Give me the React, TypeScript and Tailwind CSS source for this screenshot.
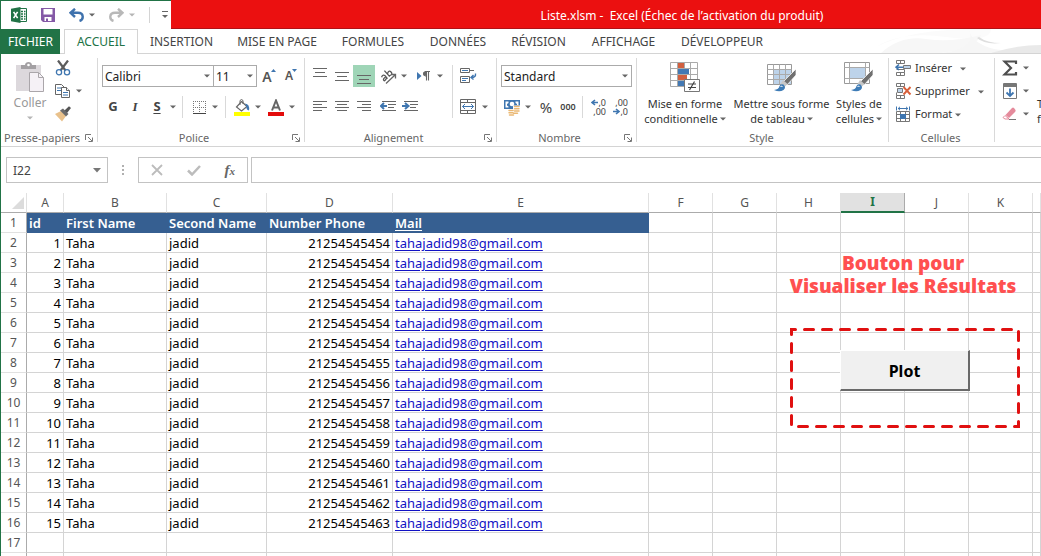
import type { ReactNode } from "react";

const UI = "font-['Noto_Sans','Open_Sans',sans-serif]";

function Caret({ light = false }: { light?: boolean }) {
  return (
    <svg width="6" height="4" viewBox="0 0 6 4" className="shrink-0" aria-hidden="true">
      <path d="M0 .5h6L3 3.5z" fill={light ? "#b5b5b5" : "#666"} />
    </svg>
  );
}

function MenuCaret({ label, light }: { label: string; light?: boolean }) {
  return (
    <button aria-label={label} className="flex h-5 w-2.5 shrink-0 items-center justify-center">
      <Caret light={light} />
    </button>
  );
}

function Tool({ label, active, children }: { label: string; active?: boolean; children: ReactNode }) {
  return (
    <button
      aria-label={label}
      className={`flex h-[22px] w-[22px] shrink-0 items-center justify-center ${active ? "bg-[#9fd5b7]" : ""}`}
    >
      {children}
    </button>
  );
}

function Separator() {
  return <div className="my-1 w-px shrink-0 bg-[#d9d9d9]" />;
}

function Launcher({ label }: { label: string }) {
  return (
    <button aria-label={label} className="flex h-4 w-3 items-center justify-center">
      <svg width="8" height="8" viewBox="0 0 8 8" fill="none" stroke="#777">
        <path d="M.5 6V.5H6M3 3l4 4M7.5 3.5v4h-4" />
      </svg>
    </button>
  );
}

function Group({ title, width, launcher, children }: { title: string; width: string; launcher?: boolean; children: ReactNode }) {
  return (
    <>
      <section aria-label={title} className={`flex shrink-0 flex-col ${width}`}>
        <div className="h-[76px]">{children}</div>
        <div className="flex h-4 items-center pr-0.5">
          <span className="flex-1 text-center text-[11px] leading-4 whitespace-nowrap text-[#666]">{title}</span>
          {launcher && <Launcher label={`Options : ${title}`} />}
        </div>
      </section>
      <Separator />
    </>
  );
}

function Dropdown({ label, value, width }: { label: string; value: string; width: string }) {
  return (
    <div className={`grid shrink-0 items-center border border-[#ababab] bg-white ${width}`}>
      <select
        aria-label={label}
        defaultValue={value}
        className="col-start-1 row-start-1 h-5 w-full appearance-none px-0.5 pt-px text-[12px] leading-5 text-[#222] outline-none"
      >
        <option>{value}</option>
      </select>
      <span className="pointer-events-none col-start-1 row-start-1 mr-[3px] justify-self-end">
        <Caret />
      </span>
    </div>
  );
}

function Lines({ rows }: { rows: [number, number, number][] }) {
  return (
    <svg width="16" height="16" viewBox="0 0 16 16" stroke="#666" aria-hidden="true">
      {rows.map(([x1, x2, y]) => (
        <path key={y} d={`M${x1} ${y}.5H${x2}`} />
      ))}
    </svg>
  );
}

function Indent({ right = false }: { right?: boolean }) {
  return (
    <svg width="16" height="16" viewBox="0 0 16 16" fill="none" stroke="#666" aria-hidden="true">
      <path d="M2 2.5h14M8 5.5h8M8 8.500h6M2 11.5h14" />
      <path
        d={right ? "M0 7h6M3 4l3.500 3L3 10" : "M1 7h6M4 4L.8 7 4 10"}
        stroke="#3f76b0"
        strokeWidth="2"
      />
    </svg>
  );
}

function ExcelLogo() {
  return (
    <svg width="16" height="16" viewBox="0 0 16 16" aria-hidden="true">
      <path d="M8.500 1.500h7v13h-7" fill="#fff" stroke="#217346" />
      <path d="M10 4.500h2M13 4.500h1.500M10 7h2M13 7h1.500M10 9.500h2M13 9.500h1.500M10 12h2M13 12h1.500" stroke="#217346" strokeWidth="1.300" />
      <path d="M0 1.700L9.500 0v16L0 14.300z" fill="#217346" />
      <path d="M2.600 4.800l4 6.400M6.600 4.800l-4 6.400" stroke="#fff" strokeWidth="1.600" />
    </svg>
  );
}

function SaveIcon() {
  return (
    <svg width="14" height="14" viewBox="0 0 14 14" aria-hidden="true">
      <path d="M0 0h14v14H2L0 12z" fill="#8459a6" />
      <path d="M2.500 1h9v5.500h-9zM3.500 9h7v4h-7z" fill="#fff" />
      <path d="M5 10.500h2V13H5z" fill="#8459a6" />
    </svg>
  );
}

function UndoIcon({ redo = false }: { redo?: boolean }) {
  return (
    <svg width="15" height="14" viewBox="0 0 15 14" fill="none" stroke={redo ? "#b8b8b8" : "#3f72ad"} strokeWidth="2.400" aria-hidden="true">
      {redo ? <path d="M9 .8l4.500 4L9 9M13 4.800H6C0 4.800 0 11.500 4.500 13" /> : <path d="M6 .8l-4.500 4L6 9M2 4.800h7c6 0 6 6.700 1.500 8.200" />}
    </svg>
  );
}

function PasteIcon() {
  return (
    <svg width="30" height="32" viewBox="0 0 30 32" aria-hidden="true">
      <path d="M1 4h25v26H1z" fill="#dcd8dc" />
      <path d="M6 8V4h4c0-4 7-4 7 0h4v4z" fill="#a3a0a3" />
      <circle cx="13.500" cy="4" r="1.300" fill="#fff" />
      <path d="M14.500 11.500h9l5 5v14h-14z" fill="#f5f1f6" stroke="#aaa6aa" />
      <path d="M23.500 11.500v5h5" fill="none" stroke="#aaa6aa" />
    </svg>
  );
}

function CutIcon() {
  return (
    <svg width="16" height="16" viewBox="0 0 16 16" fill="none" aria-hidden="true">
      <path d="M3 .5l7.500 10M13 .5L5.500 10.500" stroke="#5c5c5c" strokeWidth="2.200" />
      <circle cx="4" cy="12.300" r="2.600" stroke="#3f76b0" strokeWidth="1.300" />
      <circle cx="12" cy="12.300" r="2.600" stroke="#3f76b0" strokeWidth="1.300" />
    </svg>
  );
}

function CopyIcon() {
  return (
    <svg width="16" height="16" viewBox="0 0 16 16" fill="#fff" stroke="#666" aria-hidden="true">
      <path d="M.5 1.500h6l3 3v7h-9z" />
      <path d="M2 5h5M2 7.500h5" stroke="#3f76b0" />
      <path d="M6.500 4.500h5l3 3v7h-8z" />
      <path d="M11.500 4.500v3h3" />
      <path d="M8 9.500h5M8 12h5" stroke="#3f76b0" />
    </svg>
  );
}

function BrushIcon() {
  return (
    <svg width="16" height="16" viewBox="0 0 16 16" aria-hidden="true">
      <path d="M0 8l6-3 5 5-4 5.500z" fill="#e9c18b" />
      <path d="M5 4.500l3-2 5.500 5.500-2.500 2.500z" fill="#6b6b6b" />
      <path d="M9.500 4.500L14 .3 16 2l-4 5z" fill="#555" />
    </svg>
  );
}

function BordersIcon() {
  return (
    <svg width="15" height="15" viewBox="0 0 15 15" fill="none" stroke="#777" aria-hidden="true">
      <path d="M1 1.500h13M1 7.500h13M1.500 1v12M7.500 1v12M13.500 1v12" strokeDasharray="1 1" />
      <path d="M1 13.500h13" stroke="#444" />
    </svg>
  );
}

function FillIcon() {
  return (
    <svg width="17" height="17" viewBox="0 0 17 17" aria-hidden="true">
      <path d="M7.500 2.500l5.500 5-5.500 4.500-5-4z" fill="#fff" stroke="#666" strokeWidth="1.200" />
      <path d="M6 6V1.500q1.500-2 3 0V5" fill="none" stroke="#666" />
      <path d="M11 4.500q5 .5 4 7-3-.5-2.500-4z" fill="#3f76b0" />
      <path d="M0 13h16v4H0z" fill="#ffff00" />
    </svg>
  );
}

function FontColorIcon() {
  return (
    <svg width="16" height="17" viewBox="0 0 16 17" aria-hidden="true">
      <path d="M4 11.500L8 1.500l4 10M5.500 8.500h5" fill="none" stroke="#666" strokeWidth="2" />
      <path d="M0 13h16v4H0z" fill="#e30b0b" />
    </svg>
  );
}

function OrientationIcon() {
  return (
    <svg width="17" height="17" viewBox="0 0 17 17" fill="none" stroke="#555" aria-hidden="true">
      <g transform="rotate(-42 7 7)" strokeWidth="1.300">
        <path d="M1.500 5q3-1.500 3.500 1v4M5 7.500q-4-.5-4 1.300t4 0M8 2v8M8 6.500q4-2.500 4 1t-4 1.500" />
      </g>
      <path d="M6 15.500L15 7M11.500 6.500H15.500V10.500" stroke="#666" strokeWidth="1.300" />
    </svg>
  );
}

function ParagraphIcon() {
  return (
    <svg width="14" height="12" viewBox="0 0 14 12" aria-hidden="true">
      <path d="M0 2l4.500 4L0 10z" fill="#3f76b0" />
      <path d="M13 1.500H8.500a2.300 2.300 0 0 0 0 4.500H9M9.500 1.500v9M11.500 1.500v9" fill="none" stroke="#666" strokeWidth="1.100" />
      <circle cx="8" cy="3.700" r="2" fill="#666" />
    </svg>
  );
}

function WrapIcon() {
  return (
    <svg width="17" height="16" viewBox="0 0 17 16" fill="none" stroke="#666" aria-hidden="true">
      <path d="M.5 .5h9v4h-9zM.5 8.500h9v6h-9zM9 2.500h5" />
      <path d="M2 2.500h6M2 10.500h6M2 12.500h4" stroke="#3f76b0" />
      <path d="M15.500 5.500q.5 4-4 4M13.500 7l-2.500 2.500 2.500 2" stroke="#3f76b0" strokeWidth="1.400" />
    </svg>
  );
}

function MergeIcon() {
  return (
    <svg width="16" height="16" viewBox="0 0 16 16" fill="none" stroke="#666" aria-hidden="true">
      <path d="M.5 .5h15v14H.5zM.5 3.500h15M.5 11.500h15M7.500 .5v3M7.500 11.500v3" />
      <path d="M2.500 7.500h11M5 5L2.500 7.500 5 10M11 5l2.500 2.500L11 10" stroke="#3f76b0" />
    </svg>
  );
}

function MoneyIcon() {
  return (
    <svg width="18" height="17" viewBox="0 0 18 17" aria-hidden="true">
      <path d="M1 1h16v9H1z" fill="#3f76b0" />
      <path d="M2.500 2.500h3v1.500l-1.500 1v1.500l1.500 1v1h-3zM15.500 6V2.500h-3V4l1.500 1v1z" fill="#fff" />
      <circle cx="9" cy="5" r="2.300" fill="#fff" />
      <path d="M10 6.500h8v9H4v-5h6z" fill="#fff" />
      <path d="M11.500 7.500h4.500M11.500 9.800h4.500M11.500 12h4.500M6 11.500h4M6 13.700h4M10.500 14.200h4M6.500 16h4" stroke="#eab873" strokeWidth="1.500" strokeLinecap="round" />
    </svg>
  );
}

function DecimalIcon({ less = false }: { less?: boolean }) {
  const arrow = (
    <svg width="7" height="7" viewBox="0 0 7 7" className="shrink-0" aria-hidden="true">
      <path d={less ? "M0 3.500h6M3 1l3 2.500L3 6" : "M1 3.500h6M4 1L1 3.500 4 6"} fill="none" stroke="#3f76b0" strokeWidth="1.600" />
    </svg>
  );
  return (
    <span className="flex w-4 flex-col items-end text-[9px] leading-[9px]">
      <span className="flex items-center">{!less && arrow}{less ? ",00" : ",0"}</span>
      <span className="flex items-center">{less && arrow}{less ? ",0" : ",00"}</span>
    </span>
  );
}

function ConditionalIcon() {
  return (
    <svg width="30" height="30" viewBox="0 0 30 30" aria-hidden="true">
      <path d="M.5 .5h27v24H.5zM.5 6.500h27M.5 12.500h27M.5 18.500h27M7.500 .5v24M14.500 .5v24M20.500 .5v24" fill="#fff" stroke="#aaa" />
      <path d="M8 1h6v5H8zM8 13h9v5H8z" fill="#d2603f" />
      <path d="M8 7h11v5H8zM8 19h6v5H8z" fill="#4379b4" />
      <path d="M14.500 17.500h15v12h-15z" fill="#fff" stroke="#777" />
      <path d="M18 22h8M18 25.500h8M24.500 19.500l-5 8.500" stroke="#444" strokeWidth="1.200" />
    </svg>
  );
}

function StyleBrushIcon({ cell = false }: { cell?: boolean }) {
  return (
    <svg width="30" height="30" viewBox="0 0 30 30" aria-hidden="true">
      {cell ? (
        <>
          <path d="M.5 .5h25v21H.5z" fill="#fff" stroke="#999" />
          <path d="M6 6h15v10H6z" fill="#bdd3ea" />
          <path d="M.5 5.500h25M.5 16.500h25M5.500 .5v21M21.500 .5v21" stroke="#aaa" />
        </>
      ) : (
        <>
          <path d="M.5 2.500h24v20H.5z" fill="#fff" stroke="#999" />
          <path d="M7 8h17v14H7z" fill="#bdd3ea" />
          <path d="M.5 7.500h24M.5 12.500h24M.5 17.500h24M6.500 2.500v20M12.500 2.500v20M18.500 2.500v20" stroke="#aaa" />
        </>
      )}
      <path d="M29 7v6l-9 10-4-3z" fill="#707070" stroke="#fff" strokeWidth=".7" />
      <path d="M16 18l4.500 4-3 3-4-3z" fill="#c8c8c8" />
      <path d="M7 28q5-.5 5.500-4 1-2.500 4-1.500 3 3 0 5.500-4 2.500-9.500 0z" fill="#3e7cb7" />
      <path d="M13.500 24.500q1.500-1 2 .5" stroke="#fff" fill="none" />
    </svg>
  );
}

function InsertIcon() {
  return (
    <svg width="17" height="17" viewBox="0 0 17 17" fill="none" stroke="#777" aria-hidden="true">
      <path d="M1.500 .5h8v3h-8zM5.500 .5v3M1.500 12.500h8v3h-8zM5.500 12.500v3M1.500 9.500h8v3" />
      <path d="M8.500 5.500h7v3h-7z" fill="#bdd3ea" />
      <path d="M1 7.200h7M4 4.500L1 7.200l3 2.800" stroke="#3f76b0" strokeWidth="1.600" />
    </svg>
  );
}

function DeleteIcon() {
  return (
    <svg width="17" height="17" viewBox="0 0 17 17" fill="none" stroke="#777" aria-hidden="true">
      <path d="M1.500 .5h8v3h-8zM5.500 .5v3M1.500 12.500h8v3h-8zM5.500 12.500v3M1.500 9.500v3" />
      <path d="M2.500 5.500h5v4h-5z" fill="#bdd3ea" />
      <path d="M8.500 4l7 7.500M15.500 4l-7 7.500" stroke="#d9603b" strokeWidth="1.900" />
    </svg>
  );
}

function FormatIcon() {
  return (
    <svg width="17" height="17" viewBox="0 0 17 17" fill="none" stroke="#777" aria-hidden="true">
      <path d="M1.500 5.500h13v10h-13zM1.500 8.500h13M1.500 12.500h13M5.500 5.500v10M10.500 5.500v10" />
      <path d="M5 8h6v5H5z" fill="#3f76b0" stroke="none" />
      <path d="M1.500 .5v4M14.500 .5v4M3 2.500h10M5 .8L3.200 2.500 5 4.200M11 .8l1.800 1.700L11 4.200" stroke="#3f76b0" />
    </svg>
  );
}

function SigmaIcon() {
  return (
    <svg width="16" height="16" viewBox="0 0 16 16" aria-hidden="true">
      <path d="M14 4V1.500H2.500L9 8l-6.500 6.500H14V12" fill="none" stroke="#4e4e4e" strokeWidth="2.200" />
    </svg>
  );
}

function FillDownIcon() {
  return (
    <svg width="14" height="16" viewBox="0 0 14 16" aria-hidden="true">
      <path d="M.5 .5h13v15H.5z" fill="#fff" stroke="#777" />
      <path d="M1 1h12v3H1z" fill="#777" />
      <path d="M7 5.500v7.500M3.500 9.500L7 13l3.500-3.500" fill="none" stroke="#3f76b0" strokeWidth="1.800" />
    </svg>
  );
}

function EraserIcon() {
  return (
    <svg width="16" height="14" viewBox="0 0 16 14" aria-hidden="true">
      <path d="M3.500 8L10 1q1-1 2 0l1.500 2q.5 1-.5 2L7 11z" fill="#e58b9c" />
      <path d="M3 8.500L7 12H3L1 10.500z" fill="#fff" stroke="#e58b9c" />
      <path d="M7 12.500h7" stroke="#777" />
    </svg>
  );
}

const tabs = [
  { name: "INSERTION", width: "w-[87px]" },
  { name: "MISE EN PAGE", width: "w-[104px]" },
  { name: "FORMULES", width: "w-[88px]" },
  { name: "DONNÉES", width: "w-[82px]" },
  { name: "RÉVISION", width: "w-[79px]" },
  { name: "AFFICHAGE", width: "w-[91px]" },
  { name: "DÉVELOPPEUR", width: "w-[106px]" },
];

function TitleBar() {
  return (
    <header className="flex h-[29px] bg-white">
      <div className="flex w-[170px] shrink-0 items-center border-t border-[#217346] pl-[10px]">
        <ExcelLogo />
        <button aria-label="Enregistrer" className="ml-3.5"><SaveIcon /></button>
        <button aria-label="Annuler" className="ml-3.5"><UndoIcon /></button>
        <div className="ml-[3px] flex"><MenuCaret label="Historique des annulations" /></div>
        <button aria-label="Rétablir" disabled className="ml-3"><UndoIcon redo /></button>
        <div className="ml-[3px] flex"><MenuCaret label="Historique des rétablissements" light /></div>
        <div className="ml-3 h-4 w-px bg-[#d4d4d4]" />
        <button aria-label="Personnaliser la barre d'outils" className="ml-3">
          <svg width="6" height="8" viewBox="0 0 6 8"><path d="M0 .5h6" stroke="#666" /><path d="M0 4h6L3 7z" fill="#666" /></svg>
        </button>
      </div>
      <div className="flex min-w-0 flex-1 items-center justify-center border-b border-[#b01217] bg-[#eb1010] pt-1 pl-[152px]">
        <h1 className="text-[12px] leading-4 whitespace-pre text-white">Liste.xlsm -  Excel (Échec de l’activation du produit)</h1>
      </div>
    </header>
  );
}

function RibbonTabs() {
  return (
    <nav aria-label="Onglets du ruban" className="flex h-[25px] text-[12px] leading-[26px] whitespace-nowrap text-[#444]">
      <button className="w-[59px] shrink-0 bg-[#217346] text-white">FICHIER</button>
      <div className="w-1 shrink-0 border-b border-[#d4d4d4]" />
      <button className="w-[74px] shrink-0 border-x border-t border-[#d4d4d4] bg-white leading-6 text-[#217346]">ACCUEIL</button>
      {tabs.map((t) => (
        <button key={t.name} className={`shrink-0 border-b border-[#d4d4d4] ${t.width}`}>{t.name}</button>
      ))}
      <div className="flex min-w-0 flex-1 justify-end overflow-hidden border-b border-[#d4d4d4]">
        <svg width="190" height="24" viewBox="0 0 190 24" className="shrink-0" aria-hidden="true">
          <path d="M25 18Q50 2 95 8t45-8h-15Q60 0 25 18z" fill="#fbfbfb" />
          <path d="M30 24Q50 6 75 10t55-4q-5 14-40 18z" fill="#f7f7f7" />
          <path d="M118 0q2 14 25 20 20 4 47-4v8H90q36-4 28-24z" fill="#f6f6f6" />
          <path d="M126 9q8 7 24 5-14 0-22-6z" fill="#dedede" />
          <path d="M140 24q25-8 50-8v8z" fill="#e9e9e9" />
        </svg>
      </div>
    </nav>
  );
}

function BigButton({ icon, first, second, width }: { icon: ReactNode; first: string; second: string; width: string }) {
  return (
    <button className={`flex shrink-0 flex-col items-center pt-2 text-[11px] leading-[15px] whitespace-nowrap text-[#333] ${width}`}>
      {icon}
      <span className="mt-1">{first}</span>
      <span className="flex items-center gap-0.5">{second}<Caret /></span>
    </button>
  );
}

function SmallButton({ icon, text, gap }: { icon: ReactNode; text: string; gap: string }) {
  return (
    <button className={`flex h-[23px] items-center text-[11px] whitespace-nowrap text-[#333] ${gap}`}>
      <span className="flex items-center gap-[3px]">{icon}{text}</span>
      <Caret />
    </button>
  );
}

function Ribbon() {
  return (
    <div className="flex h-[93px] overflow-hidden border-b border-[#d4d4d4] bg-white">
      <Group title="Presse-papiers" width="w-[96px]" launcher>
        <div className="flex h-full">
          <button className="flex w-[50px] shrink-0 flex-col items-center pt-[7px] pl-2 text-[12px] leading-[15px] text-[#999]">
            <PasteIcon />
            <span className="mt-0.5">Coller</span>
            <span className="flex h-4 items-center"><Caret light /></span>
          </button>
          <div className="flex flex-col gap-px pt-[3px] pl-px">
            <Tool label="Couper"><CutIcon /></Tool>
            <div className="flex items-center"><Tool label="Copier"><CopyIcon /></Tool><MenuCaret label="Options de copie" /></div>
            <Tool label="Reproduire la mise en forme"><BrushIcon /></Tool>
          </div>
        </div>
      </Group>

      <Group title="Police" width="w-[206px]" launcher>
        <div className="flex flex-col gap-[9px] pt-[11px] pl-1">
          <div className="flex h-[22px]">
            <Dropdown label="Police" value="Calibri" width="w-[112px]" />
            <Dropdown label="Taille de police" value="11" width="-ml-px w-[44px]" />
            <div className="flex pl-px font-semibold text-[#555]">
              <Tool label="Augmenter la taille"><span className="text-[14px]">A</span><span className="mb-3 -ml-px"><svg width="5" height="3" viewBox="0 0 5 3"><path d="M0 3h5L2.500 0z" fill="#3f76b0" /></svg></span></Tool>
              <Tool label="Réduire la taille"><span className="text-[12px]">A</span><span className="mb-3 -ml-px"><svg width="5" height="3" viewBox="0 0 5 3"><path d="M0 0h5L2.500 3z" fill="#3f76b0" /></svg></span></Tool>
            </div>
          </div>
          <div className="flex h-[22px] items-center text-[13px] font-bold text-[#444]">
            <Tool label="Gras">G</Tool>
            <Tool label="Italique"><span className="font-['Liberation_Serif',serif] italic">I</span></Tool>
            <Tool label="Souligné"><span className="underline underline-offset-2">S</span></Tool>
            <MenuCaret label="Styles de soulignement" />
            <div className="mr-[5px] ml-1 h-[22px] w-px bg-[#d9d9d9]" />
            <Tool label="Bordures"><BordersIcon /></Tool>
            <MenuCaret label="Types de bordure" />
            <div className="mx-[5px] h-[22px] w-px bg-[#d9d9d9]" />
            <Tool label="Couleur de remplissage"><FillIcon /></Tool>
            <MenuCaret label="Couleurs de remplissage" />
            <div className="flex items-center pl-0.5"><Tool label="Couleur de police"><FontColorIcon /></Tool><MenuCaret label="Couleurs de police" /></div>
          </div>
        </div>
      </Group>

      <Group title="Alignement" width="w-[191px]" launcher>
        <div className="flex pt-[11px] pl-1">
          <div className="flex w-[143px] flex-col gap-[9px]">
            <div className="flex h-[22px] items-center">
              <Tool label="Aligner en haut"><Lines rows={[[1, 15, 0], [3, 13, 4], [1, 15, 8]]} /></Tool>
              <Tool label="Aligner au centre"><Lines rows={[[1, 15, 4], [3, 13, 8], [1, 15, 12]]} /></Tool>
              <Tool label="Aligner en bas" active><Lines rows={[[1, 15, 7], [3, 13, 11], [1, 15, 15]]} /></Tool>
              <div className="flex items-center pl-0.5"><Tool label="Orientation"><OrientationIcon /></Tool><MenuCaret label="Options d'orientation" /></div>
              <div className="flex items-center pl-1"><Tool label="Sens du texte"><ParagraphIcon /></Tool><MenuCaret label="Options de sens du texte" /></div>
            </div>
            <div className="flex h-[22px] items-center">
              <Tool label="Aligner à gauche"><Lines rows={[[1, 15, 2], [1, 10, 5], [1, 15, 8], [1, 10, 11]]} /></Tool>
              <Tool label="Centrer"><Lines rows={[[1, 15, 2], [3, 13, 5], [1, 15, 8], [3, 13, 11]]} /></Tool>
              <Tool label="Aligner à droite"><Lines rows={[[1, 15, 2], [6, 15, 5], [1, 15, 8], [6, 15, 11]]} /></Tool>
              <div className="flex pl-0.5"><Tool label="Diminuer le retrait"><Indent /></Tool><Tool label="Augmenter le retrait"><Indent right /></Tool></div>
            </div>
          </div>
          <div className="w-px bg-[#d9d9d9]" />
          <div className="flex flex-col gap-[9px] pl-1">
            <Tool label="Renvoyer à la ligne"><WrapIcon /></Tool>
            <div className="flex items-center gap-px"><Tool label="Fusionner et centrer"><MergeIcon /></Tool><MenuCaret label="Options de fusion" /></div>
          </div>
        </div>
      </Group>

      <Group title="Nombre" width="w-[139px]" launcher>
        <div className="flex flex-col gap-[9px] pt-[11px] pl-1">
          <Dropdown label="Format de nombre" value="Standard" width="w-[131px]" />
          <div className="flex h-[22px] items-center text-[#444]">
            <Tool label="Format comptable"><MoneyIcon /></Tool>
            <MenuCaret label="Formats comptables" />
            <div className="flex pl-0.5">
              <Tool label="Pourcentage"><span className="text-[15px]">%</span></Tool>
              <Tool label="Séparateur de milliers"><span className="text-[9px] font-semibold">000</span></Tool>
            </div>
            <div className="mr-1 ml-[3px] h-[22px] w-px bg-[#d9d9d9]" />
            <Tool label="Ajouter une décimale"><DecimalIcon /></Tool>
            <Tool label="Réduire les décimales"><DecimalIcon less /></Tool>
          </div>
        </div>
      </Group>

      <Group title="Style" width="w-[251px]">
        <div className="flex h-full">
          <BigButton icon={<ConditionalIcon />} first="Mise en forme" second="conditionnelle" width="w-[96px]" />
          <BigButton icon={<StyleBrushIcon />} first="Mettre sous forme" second="de tableau" width="w-[97px]" />
          <BigButton icon={<StyleBrushIcon cell />} first="Styles de" second="cellules" width="w-[58px]" />
        </div>
      </Group>

      <Group title="Cellules" width="w-[105px]">
        <div className="flex flex-col pt-[3px] pl-1.5">
          <SmallButton icon={<InsertIcon />} text="Insérer" gap="gap-2" />
          <SmallButton icon={<DeleteIcon />} text="Supprimer" gap="gap-2" />
          <SmallButton icon={<FormatIcon />} text="Format" gap="gap-[3px]" />
        </div>
      </Group>

      <section aria-label="Édition" className="flex shrink-0">
        <div className="flex flex-col gap-px pt-[3px] pl-1">
          <div className="flex items-center"><Tool label="Somme"><SigmaIcon /></Tool><MenuCaret label="Fonctions" /></div>
          <div className="flex items-center"><Tool label="Remplissage"><FillDownIcon /></Tool><MenuCaret label="Options de remplissage" /></div>
          <div className="flex items-center"><Tool label="Effacer"><EraserIcon /></Tool><MenuCaret label="Options d'effacement" /></div>
        </div>
        <button className="flex flex-col items-start pt-[42px] pl-1.5 text-[11px] leading-[15px] whitespace-nowrap text-[#333]">
          <span>Trier et</span>
          <span>filtrer</span>
        </button>
      </section>
    </div>
  );
}

function FormulaBar() {
  return (
    <div className="flex h-[46px] items-start bg-white pt-[10px] pl-[5px] text-[#444]">
      <div className="grid h-[26px] w-[102px] shrink-0 items-center border border-[#c3c3c3]">
        <input aria-label="Zone de nom" defaultValue="I22" className="col-start-1 row-start-1 h-6 w-full pl-1.5 text-[12px] outline-none" />
        <button aria-label="Noms définis" className="col-start-1 row-start-1 mr-1.5 justify-self-end">
          <svg width="8" height="5" viewBox="0 0 8 5"><path d="M0 0h8L4 4.500z" fill="#777" /></svg>
        </button>
      </div>
      <div className="flex h-[26px] w-[30px] shrink-0 flex-col items-center justify-center gap-0.5">
        <span className="h-0.5 w-0.5 bg-[#b0b0b0]" />
        <span className="h-0.5 w-0.5 bg-[#b0b0b0]" />
        <span className="h-0.5 w-0.5 bg-[#b0b0b0]" />
      </div>
      <div className="flex h-[26px] w-[110px] shrink-0 items-center justify-around border border-[#c3c3c3]">
        <button aria-label="Annuler la saisie"><svg width="12" height="12" viewBox="0 0 12 12"><path d="M1 1l10 10M11 1L1 11" stroke="#bcbcbc" strokeWidth="1.800" /></svg></button>
        <button aria-label="Valider la saisie"><svg width="14" height="11" viewBox="0 0 14 11"><path d="M1 5.500L5 9.500 13 1" fill="none" stroke="#bcbcbc" strokeWidth="2.500" /></svg></button>
        <button aria-label="Insérer une fonction" className="font-['Liberation_Serif',serif] text-[15px] leading-5 font-bold text-[#666] italic">f<span className="text-[11px]">x</span></button>
      </div>
      <input aria-label="Barre de formule" className="ml-[3px] h-[26px] min-w-0 flex-1 border border-r-0 border-[#c3c3c3] px-2 text-[12px] outline-none" />
    </div>
  );
}

const letters = ["A", "B", "C", "D", "E", "F", "G", "H", "I", "J", "K", ""];
const phones = [
  "21254545454", "21254545454", "21254545454", "21254545454", "21254545454", "21254545454", "21254545455", "21254545456",
  "21254545457", "21254545458", "21254545459", "21254545460", "21254545461", "21254545462", "21254545463",
];
const cell = "border-r border-b border-[#d4d4d4] p-0 pt-px";
const headCell = "bg-[#365f91] p-0 pl-[2px] text-left font-semibold text-white";
const rowHead = "border-r border-b border-r-[#ababab] border-b-[#e1e1e1] p-0 pt-px text-center text-[12px] font-normal text-[#555]";

function EmptyCells({ row, count }: { row: number; count: number }) {
  return <>{Array.from({ length: count }, (_, i) => <td key={`${row}-${i}`} className={cell} />)}</>;
}

function Sheet() {
  return (
    <main className="relative min-h-0 flex-1 overflow-hidden bg-white">
      <table className="w-full table-fixed border-separate border-spacing-0 text-[13px] leading-[18px] whitespace-nowrap text-black">
        <colgroup>
          <col className="w-[26px]" />
          <col className="w-[37px]" />
          <col className="w-[103px]" />
          <col className="w-[100px]" />
          <col className="w-[126px]" />
          <col className="w-[256px]" />
          <col className="w-[64px]" />
          <col className="w-[64px]" />
          <col className="w-[64px]" />
          <col className="w-[64px]" />
          <col className="w-[64px]" />
          <col className="w-[64px]" />
          <col />
        </colgroup>
        <thead>
          <tr className="h-5 text-[12px] text-[#555]">
            <td className="border-r border-b border-r-[#e1e1e1] border-b-[#ababab] p-0">
              <svg width="12" height="12" viewBox="0 0 12 12" className="mr-0.5 ml-auto" aria-hidden="true"><path d="M12 0v12H0z" fill="#dcdcdc" /></svg>
            </td>
            {letters.map((l) => (
              <th
                key={l}
                scope="col"
                className={l === "I" ? "border-r border-b-2 border-r-[#ababab] border-b-[#217346] bg-[#e1e1e1] p-0 font-bold text-[#217346]" : "border-r border-b border-r-[#e1e1e1] border-b-[#ababab] p-0 font-normal"}
              >
                {l}
              </th>
            ))}
          </tr>
        </thead>
        <tbody>
          <tr className="h-5">
            <th scope="row" className={rowHead}>1</th>
            <th className={headCell}>id</th>
            <th className={headCell}>First Name</th>
            <th className={headCell}>Second Name</th>
            <th className={headCell}>Number Phone</th>
            <th className={headCell}><span className="underline underline-offset-2">Mail</span></th>
            <EmptyCells row={1} count={7} />
          </tr>
          {phones.map((phone, i) => (
            <tr key={i} className="h-5">
              <th scope="row" className={rowHead}>{i + 2}</th>
              <td className={`${cell} pr-[2px] text-right`}>{i + 1}</td>
              <td className={`${cell} pl-[2px]`}>Taha</td>
              <td className={`${cell} pl-[2px]`}>jadid</td>
              <td className={`${cell} pr-[2px] text-right`}>{phone}</td>
              <td className={`${cell} pl-[2px]`}><a href="mailto:tahajadid98@gmail.com" className="text-[#1111c4] underline underline-offset-2">tahajadid98@gmail.com</a></td>
              <EmptyCells row={i + 2} count={7} />
            </tr>
          ))}
          {[17, 18].map((n) => (
            <tr key={n} className="h-5">
              <th scope="row" className={rowHead}>{n}</th>
              <EmptyCells row={n} count={12} />
            </tr>
          ))}
        </tbody>
      </table>

      <p className="absolute top-[59px] left-[762px] w-[280px] text-center font-['Open_Sans',sans-serif] text-[19px] leading-[23px] font-extrabold text-[#ff5050]">
        Bouton pour<br />Visualiser les Résultats
      </p>
      <svg className="absolute top-[134px] left-[788px]" width="232" height="104" viewBox="0 0 232 104" aria-hidden="true">
        <rect x="2.500" y="2.500" width="227" height="97" fill="none" stroke="#e01010" strokeWidth="3" strokeDasharray="9 9" strokeDashoffset="5" strokeLinecap="round" />
      </svg>
      <button className="absolute top-[157px] left-[839px] h-[41px] w-[130px] border-t border-r-2 border-b-2 border-l border-t-white border-r-[#696969] border-b-[#696969] border-l-white bg-[#f0f0f0] pt-px text-[16px] font-bold text-black">
        Plot
      </button>
    </main>
  );
}

export default function App() {
  return (
    <div className={`flex h-screen flex-col overflow-hidden border-l border-[#217346] bg-white ${UI}`}>
      <TitleBar />
      <RibbonTabs />
      <Ribbon />
      <FormulaBar />
      <Sheet />
    </div>
  );
}
